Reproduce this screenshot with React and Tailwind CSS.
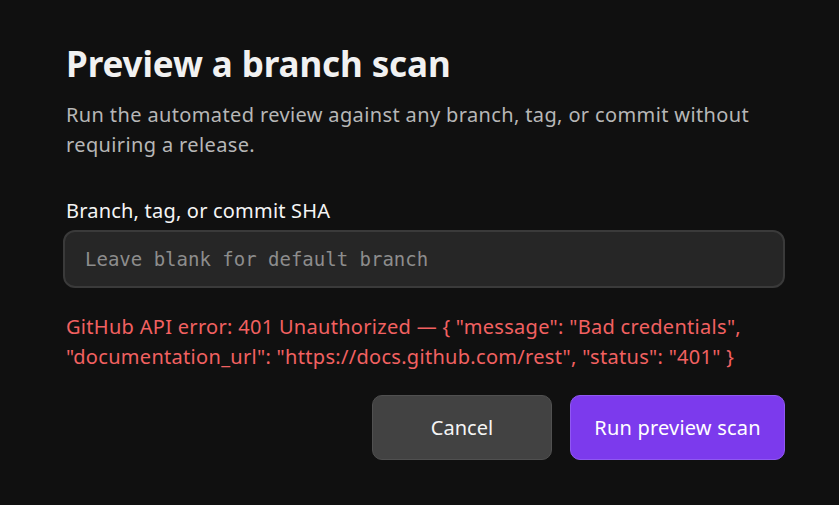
import React from 'react';

const App = () => {
  return (
    <div className="min-h-screen w-full bg-[#101010] font-['Noto_Sans','Liberation_Sans',sans-serif]">
      <div className="w-[722px] ml-[63px] pt-[42px]">
        <h1 className="pl-[3px] text-[35px] leading-[44px] font-bold tracking-[-0.1px] text-[#f1f1f1]">Preview a branch scan</h1>
        <p className="mt-[14px] pl-[3px] text-[20px] leading-[30px] tracking-[0.37px] text-[#b7b7b7]">
          Run the automated review against any branch, tag, or commit without requiring a release.
        </p>

        <label className="block mt-[36px] pl-[3px] text-[20px] leading-[30px] tracking-[0.2px] text-[#f5f5f5]">
          Branch, tag, or commit SHA
        </label>
        <input
          type="text"
          placeholder="Leave blank for default branch"
          className="mt-[4px] w-full h-[58px] rounded-[12px] border-2 border-[#3a3a3a] bg-[#262626] px-[20px] text-[19px] font-['DejaVu_Sans_Mono','Liberation_Mono',monospace] text-[#e5e5e5] placeholder:text-[#8d8d8d] outline-none"
        />

        <p className="mt-[24px] pl-[3px] text-[20px] leading-[30px] tracking-[0.3px] text-[#f26161]">
          GitHub API error: 401 Unauthorized — {'{'} "message": "Bad credentials", "documentation_url": "https://docs.github.com/rest", "status": "401" {'}'}
        </p>

        <div className="mt-[23px] flex justify-end gap-[18px]">
          <button className="h-[65px] w-[180px] rounded-[10px] border border-[#505050] bg-[#424242] text-[20px] text-[#f5f5f5]">
            Cancel
          </button>
          <button className="h-[65px] w-[215px] rounded-[10px] border border-[#9058f2] bg-[#7c3aed] text-[20px] tracking-[0.2px] text-white">
            Run preview scan
          </button>
        </div>
      </div>
    </div>
  );
};

export default App;
